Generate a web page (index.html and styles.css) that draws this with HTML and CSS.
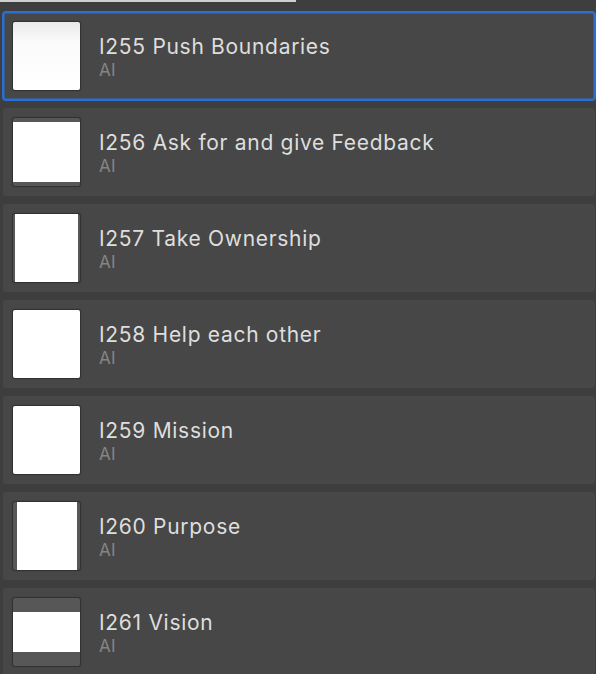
FILE: index.html
```html
<!DOCTYPE html>
<html>
<head>
<meta charset="utf-8">
<link rel="stylesheet" href="styles.css">
</head>
<body>
<div class="topbar"></div>
<ul class="list">
  <li class="item selected">
    <div class="thumb"><div class="page page-grad"></div></div>
    <div class="meta"><div class="title">I255 Push Boundaries</div><div class="sub">AI</div></div>
  </li>
  <li class="item">
    <div class="thumb"><div class="page page-wide-slight"></div></div>
    <div class="meta"><div class="title">I256 Ask for and give Feedback</div><div class="sub">AI</div></div>
  </li>
  <li class="item">
    <div class="thumb"><div class="page page-tall-slight"></div></div>
    <div class="meta"><div class="title">I257 Take Ownership</div><div class="sub">AI</div></div>
  </li>
  <li class="item">
    <div class="thumb"><div class="page"></div></div>
    <div class="meta"><div class="title">I258 Help each other</div><div class="sub">AI</div></div>
  </li>
  <li class="item">
    <div class="thumb"><div class="page"></div></div>
    <div class="meta"><div class="title">I259 Mission</div><div class="sub">AI</div></div>
  </li>
  <li class="item">
    <div class="thumb"><div class="page page-tall"></div></div>
    <div class="meta"><div class="title">I260 Purpose</div><div class="sub">AI</div></div>
  </li>
  <li class="item">
    <div class="thumb"><div class="page page-wide"></div></div>
    <div class="meta"><div class="title">I261 Vision</div><div class="sub">AI</div></div>
  </li>
</ul>
</body>
</html>
```

FILE: styles.css
```css
html, body {
  margin: 0;
  padding: 0;
}
body {
  width: 596px;
  height: 674px;
  overflow: hidden;
  background: #3e3e3e;
  font-family: Inter, "Noto Sans", sans-serif;
}
.topbar {
  width: 296px;
  height: 2px;
  background: #cfcfcf;
}
.list {
  list-style: none;
  margin: 10px 0 0 0;
  padding: 0;
  display: flex;
  flex-direction: column;
  gap: 8px;
}
.item {
  margin-left: 3px;
  width: 592px;
  height: 88px;
  flex: none;
  box-sizing: border-box;
  background: #474747;
  border-radius: 3px;
  display: flex;
  align-items: flex-start;
}
.item.selected {
  box-shadow: 0 0 0 1px #2a6fd3, inset 0 0 0 1.5px #2a6fd3;
}
.thumb {
  margin: 9px 0 0 9px;
  width: 69px;
  height: 70px;
  box-sizing: border-box;
  border: 1px solid #323232;
  border-radius: 3px;
  background: #575757;
  display: flex;
  align-items: center;
  justify-content: center;
  overflow: hidden;
  flex: none;
  box-shadow: 0 0 1px rgba(0, 0, 0, 0.35);
}
.page {
  width: 100%;
  height: 100%;
  background: #ffffff;
}
.page-grad {
  background: linear-gradient(to bottom, #e9e9e9 0%, #fbfbfb 30%, #ffffff 100%);
}
.page-wide-slight {
  height: 60px;
}
.page-tall-slight {
  width: 63px;
}
.page-tall {
  width: 60px;
}
.page-wide {
  height: 40px;
}
.meta {
  margin-left: 18px;
  padding-top: 23px;
  display: flex;
  flex-direction: column;
}
.title {
  font-size: 21px;
  line-height: 24px;
  color: #dedede;
  letter-spacing: 0.7px;
}
.sub {
  margin-top: 1px;
  font-size: 17px;
  line-height: 20px;
  color: #858585;
  letter-spacing: 0.3px;
}
```
